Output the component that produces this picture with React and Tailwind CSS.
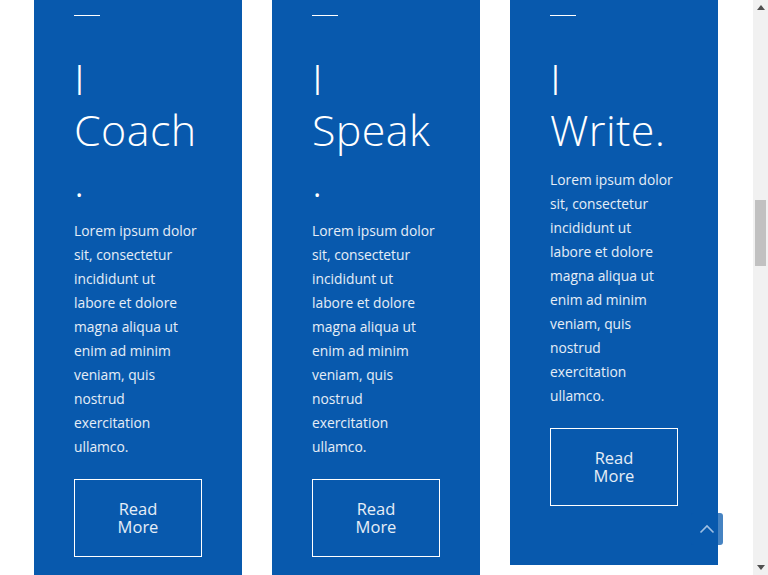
import React from "react";

const CARDS = [
  {
    id: "coach",
    heading: ["I", "Coach", "."],
  },
  {
    id: "speak",
    heading: ["I", "Speak", "."],
  },
  {
    id: "write",
    heading: ["I", "Write."],
  },
];

const BODY = [
  "Lorem ipsum dolor",
  "sit, consectetur",
  "incididunt ut",
  "labore et dolore",
  "magna aliqua ut",
  "enim ad minim",
  "veniam, quis",
  "nostrud",
  "exercitation",
  "ullamco.",
];

function ServiceCard({ heading }) {
  return (
    <div className="w-[208px] bg-[#0859ad] px-10 pt-[15px] pb-[59px] text-white">
      {/* thin accent rule */}
      <div className="w-[26px] h-px bg-white" />

      <h2 className="mt-[37px] whitespace-pre-line text-[43px] leading-[51px] font-light tracking-[0.4px]">
        {heading.join("\n")}
      </h2>

      <p className="mt-[13px] whitespace-pre-line text-[13.8px] leading-[24px] text-white/90">
        {BODY.join("\n")}
      </p>

      <a
        href="#"
        className="mt-[20px] flex h-[78px] w-[128px] items-center justify-center border border-white text-white/90"
      >
        <span className="w-[60px] text-center text-[16.5px] leading-[18px]">Read More</span>
      </a>
    </div>
  );
}

export default function App() {
  return (
    <div
      className="relative flex h-screen w-full overflow-hidden bg-white"
      style={{ fontFamily: '"Open Sans", "Liberation Sans", sans-serif' }}
    >
      {/* ─── Cards ─────────────────────────────────────────── */}
      <main className="flex flex-1 items-start justify-center gap-[30px] pr-px">
        {CARDS.map((card) => (
          <ServiceCard key={card.id} heading={card.heading} />
        ))}
      </main>

      {/* ─── Scroll-to-top button ──────────────────────────── */}
      <button className="absolute left-[691px] top-[513px] flex h-[32px] w-[32px] items-center justify-center rounded-[3px] bg-[#0859ad]/75">
        <svg width="16" height="10" viewBox="0 0 16 10" fill="none">
          <path d="M1.5 8.5 L8 2 L14.5 8.5" stroke="rgba(210,225,245,0.75)" strokeWidth="1.6" />
        </svg>
      </button>

      {/* ─── Fake scrollbar ────────────────────────────────── */}
      <aside className="flex w-[15px] flex-col items-center bg-[#f1f1f1]">
        <div className="flex h-[15px] items-center justify-center">
          <svg width="8" height="5" viewBox="0 0 8 5">
            <path d="M0 5 L4 0 L8 5 Z" fill="#505050" />
          </svg>
        </div>
        <div className="mt-[185px] h-[66px] w-[11px] bg-[#c1c1c1]" />
        <div className="flex-1" />
        <div className="flex h-[15px] items-center justify-center">
          <svg width="8" height="5" viewBox="0 0 8 5">
            <path d="M0 0 L8 0 L4 5 Z" fill="#505050" />
          </svg>
        </div>
      </aside>
    </div>
  );
}
